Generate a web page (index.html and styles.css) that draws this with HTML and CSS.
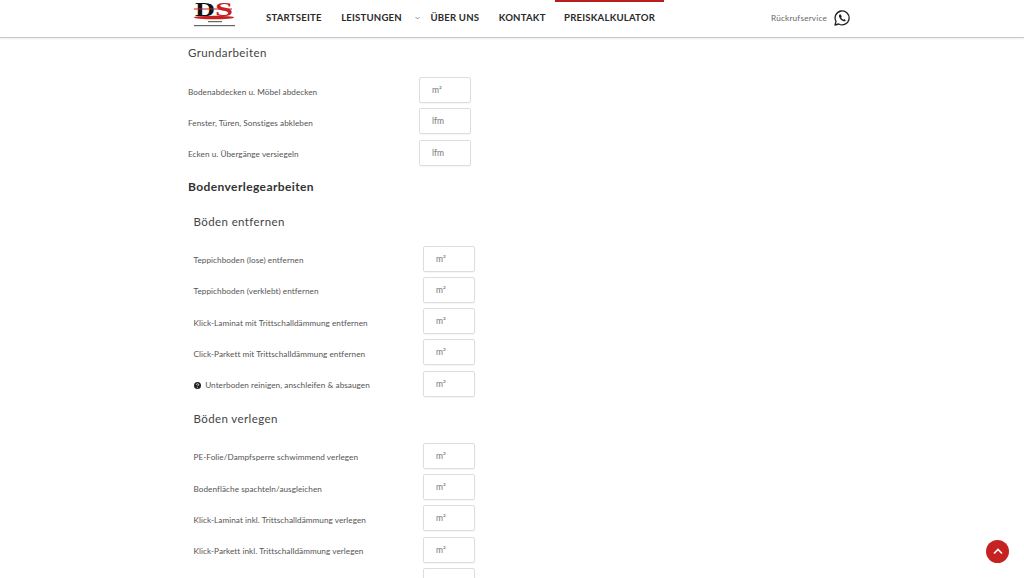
FILE: index.html
```html
<!DOCTYPE html>
<html lang="de">
<head>
    <meta charset="UTF-8">
    <meta name="viewport" content="width=device-width, initial-scale=1.0">
    <title>Preiskalkulator</title>
    <link rel="stylesheet" href="styles.css">
</head>
<body>

    <header class="header">
        <div class="header-inner">
            <div class="logo">
                <svg width="44" height="28" viewBox="0 0 44 28">
                    <text x="2" y="15.500" class="logo-d" textLength="20" lengthAdjust="spacingAndGlyphs">D</text>
                    <text x="22" y="15.500" class="logo-s" textLength="18" lengthAdjust="spacingAndGlyphs">S</text>
                    <rect x="1" y="8.500" width="38" height="1" fill="#c8201f"/>
                    <ellipse cx="21" cy="17.500" rx="20" ry="1.700" fill="#c8201f"/>
                    <rect x="15" y="21" width="14" height="1.200" fill="#666"/>
                    <rect x="1" y="25" width="41" height="1.200" fill="#666"/>
                </svg>
            </div>
            <nav class="nav">
                <a href="#">STARTSEITE</a>
                <a href="#">LEISTUNGEN</a>
                <span class="caret">
                    <svg width="5" height="4" viewBox="0 0 5 4"><path d="M0.5 1l2 2 2-2" fill="none" stroke="#777" stroke-width="0.8"/></svg>
                </span>
                <a href="#">ÜBER UNS</a>
                <a href="#">KONTAKT</a>
                <a href="#" class="active">PREISKALKULATOR</a>
            </nav>
            <div class="callback">
                <span>Rückrufservice</span>
                <svg width="16" height="16" viewBox="0 0 16 16">
                    <path d="M1 15l1-3.700A7 7 0 1 1 4.700 14z" fill="none" stroke="#222" stroke-width="1.300" stroke-linejoin="round"/>
                    <path d="M5.700 4.500c-.9.7-1 1.800-.3 3 .8 1.600 2.100 2.900 3.700 3.600 1.200.5 2.200.3 2.800-.7l-1.700-1.300-.9.700c-1-.5-1.700-1.200-2.200-2.200l.7-.9-1-2.200z" fill="#222"/>
                </svg>
            </div>
        </div>
    </header>

    <main class="content">
        <h3 class="group-title">Grundarbeiten</h3>
        <div class="row"><label>Bodenabdecken u. Möbel abdecken</label><div class="unit">m²</div></div>
        <div class="row"><label>Fenster, Türen, Sonstiges abkleben</label><div class="unit">lfm</div></div>
        <div class="row"><label>Ecken u. Übergänge versiegeln</label><div class="unit">lfm</div></div>

        <h2 class="section-title">Bodenverlegearbeiten</h2>

        <div class="section">
            <h3 class="group-title">Böden entfernen</h3>
            <div class="row"><label>Teppichboden (lose) entfernen</label><div class="unit">m²</div></div>
            <div class="row"><label>Teppichboden (verklebt) entfernen</label><div class="unit">m²</div></div>
            <div class="row"><label>Klick-Laminat mit Trittschalldämmung entfernen</label><div class="unit">m²</div></div>
            <div class="row"><label>Click-Parkett mit Trittschalldämmung entfernen</label><div class="unit">m²</div></div>
            <div class="row">
                <label>
                    <svg class="help" width="7" height="7" viewBox="0 0 7 7">
                        <circle cx="3.500" cy="3.500" r="3.500" fill="#222"/>
                        <path d="M2.300 2.700c0-1.300 2.400-1.300 2.400 0 0 .8-1.200.8-1.200 1.500" fill="none" stroke="#fff" stroke-width="0.8"/>
                        <rect x="3.100" y="4.900" width="0.8" height="0.8" fill="#fff"/>
                    </svg>
                    Unterboden reinigen, anschleifen &amp; absaugen
                </label>
                <div class="unit">m²</div>
            </div>

            <h3 class="group-title second">Böden verlegen</h3>
            <div class="row"><label>PE-Folie/Dampfsperre schwimmend verlegen</label><div class="unit">m²</div></div>
            <div class="row"><label>Bodenfläche spachteln/ausgleichen</label><div class="unit">m²</div></div>
            <div class="row"><label>Klick-Laminat inkl. Trittschalldämmung verlegen</label><div class="unit">m²</div></div>
            <div class="row"><label>Klick-Parkett inkl. Trittschalldämmung verlegen</label><div class="unit">m²</div></div>
            <div class="row"><label></label><div class="unit empty"></div></div>
        </div>
    </main>

    <a href="#" class="to-top">
        <svg width="10" height="7" viewBox="0 0 10 7"><path d="M1 5.500l4-4 4 4" fill="none" stroke="#fff" stroke-width="1.600"/></svg>
    </a>

</body>
</html>
```

FILE: styles.css
```css
html, body {
    height: 100%;
    overflow: hidden;
}
body {
    margin: 0;
    font-family: Lato, "Open Sans", sans-serif;
    color: #333;
    background: #fff;
}
.header {
    height: 37px;
    border-bottom: 1px solid #c9c9c9;
    box-shadow: 0 1px 2px rgba(0,0,0,0.08);
}
.header-inner {
    display: flex;
    align-items: center;
    height: 100%;
    margin-left: 193px;
    width: 657px;
}
.logo {
    width: 73px;
    height: 100%;
}
.logo svg {
    display: block;
}
.logo-d, .logo-s {
    font-family: "Liberation Serif", serif;
    font-weight: bold;
    font-size: 18px;
}
.logo-d {
    fill: #111;
}
.logo-s {
    fill: #c8201f;
}
.nav {
    display: flex;
    align-items: center;
    height: 100%;
}
.nav a {
    display: flex;
    align-items: center;
    height: 100%;
    margin-right: 19.5px;
    padding-bottom: 2px;
    box-sizing: border-box;
    font-size: 9.6px;
    font-weight: 700;
    letter-spacing: 0.2px;
    color: #2b2b2b;
    text-decoration: none;
}
.nav a.active {
    border-top: 2px solid #b81c1c;
    margin-right: 0;
    padding: 0 9px 4px;
    margin-left: -10px;
}
.caret {
    display: flex;
    margin: 0 10px 1px -6px;
}
.callback {
    display: flex;
    align-items: center;
    gap: 7px;
    margin-left: auto;
    padding-bottom: 1px;
    font-size: 8.2px;
    letter-spacing: 0.2px;
    color: #666;
}
.content {
    padding-left: 188px;
}
.group-title {
    margin: 0;
    height: 33px;
    padding-top: 6px;
    font-size: 11.5px;
    font-weight: 400;
    letter-spacing: 0.4px;
    line-height: 17px;
    color: #444;
}
.group-title.second {
    padding-top: 8px;
}
.section-title {
    margin: 13px 0 0;
    height: 18px;
    font-size: 12px;
    font-weight: 700;
    letter-spacing: 0.4px;
    line-height: 16px;
    color: #333;
}
.section {
    padding-left: 5.5px;
    margin-top: 10px;
}
.row {
    display: flex;
    align-items: center;
    height: 26px;
    margin-bottom: 5.25px;
}
.row label {
    width: 231px;
    padding-top: 3px;
    font-size: 8.2px;
    letter-spacing: 0.05px;
    color: #555;
}
.section .row label {
    width: 229.5px;
}
.help {
    margin-right: 2.5px;
    vertical-align: -1px;
}
.unit {
    width: 52px;
    height: 26px;
    box-sizing: border-box;
    padding: 6px 12px;
    border: 1px solid #ddd;
    border-radius: 2px;
    font-size: 8.5px;
    line-height: 12px;
    color: #777;
    box-shadow: 0 1px 1px rgba(0,0,0,0.04);
}
.to-top {
    position: fixed;
    right: 15px;
    bottom: 15px;
    width: 23px;
    height: 23px;
    border-radius: 50%;
    background: #c62222;
    display: flex;
    align-items: center;
    justify-content: center;
}
```
